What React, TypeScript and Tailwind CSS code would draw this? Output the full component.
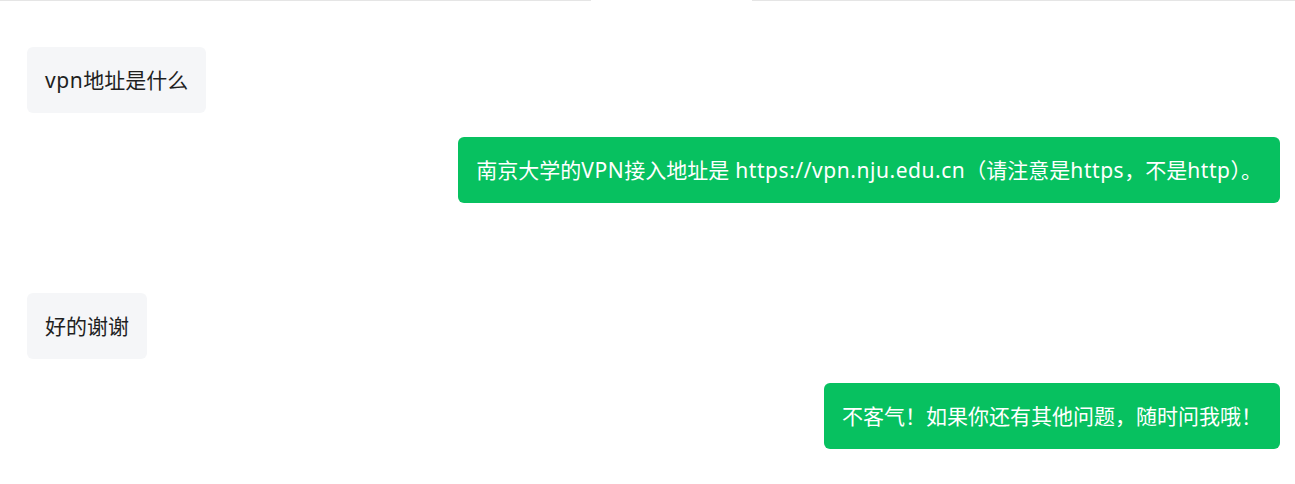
const messages = [
  { role: 'user', text: 'vpn地址是什么' },
  { role: 'bot', text: '南京大学的VPN接入地址是 https://vpn.nju.edu.cn（请注意是https，不是http）。' },
  { role: 'gap' },
  { role: 'user', text: '好的谢谢' },
  { role: 'bot', text: '不客气！如果你还有其他问题，随时问我哦！' },
];

// latin runs get a touch of tracking so they read as wide as the original font
function Text({ text }: { text: string }) {
  const parts = text.split(/([\x20-\x7e]+)/).filter(Boolean);
  return (
    <>
      {parts.map((p, i) =>
        /^[\x20-\x7e]+$/.test(p) ? (
          <span key={i} className="tracking-[0.55px]">{p}</span>
        ) : (
          <span key={i}>{p}</span>
        )
      )}
    </>
  );
}

export default function App() {
  return (
    <div className="w-[1295px] h-[484px] bg-white overflow-hidden" style={{ fontFamily: '"Noto Sans", "Noto Sans CJK SC", sans-serif' }}>
      {/* top divider */}
      <div className="flex h-[2px]">
        <div className="w-[591px] border-t border-[#e5e5e5]" />
        <div className="w-[161px]" />
        <div className="flex-1 border-t border-[#e5e5e5]" />
      </div>

      <div className="flex flex-col gap-6 pt-[45px] pl-[27px] pr-[15px]">
        {messages.map((m, i) => {
          if (m.role === 'gap') return <div key={i} className="h-[42px]" />;
          const bot = m.role === 'bot';
          return (
            <div key={i} className={bot ? 'flex justify-end' : 'flex justify-start'}>
              <div
                className={
                  bot
                    ? 'rounded-md bg-[#07c160] text-white px-[18px] py-5 text-[21px] leading-[26px]'
                    : 'rounded-md bg-[#f5f6f8] text-[#1f1f1f] px-[18px] py-5 text-[21px] leading-[26px]'
                }
              >
                <Text text={m.text!} />
              </div>
            </div>
          );
        })}
      </div>
    </div>
  );
}
